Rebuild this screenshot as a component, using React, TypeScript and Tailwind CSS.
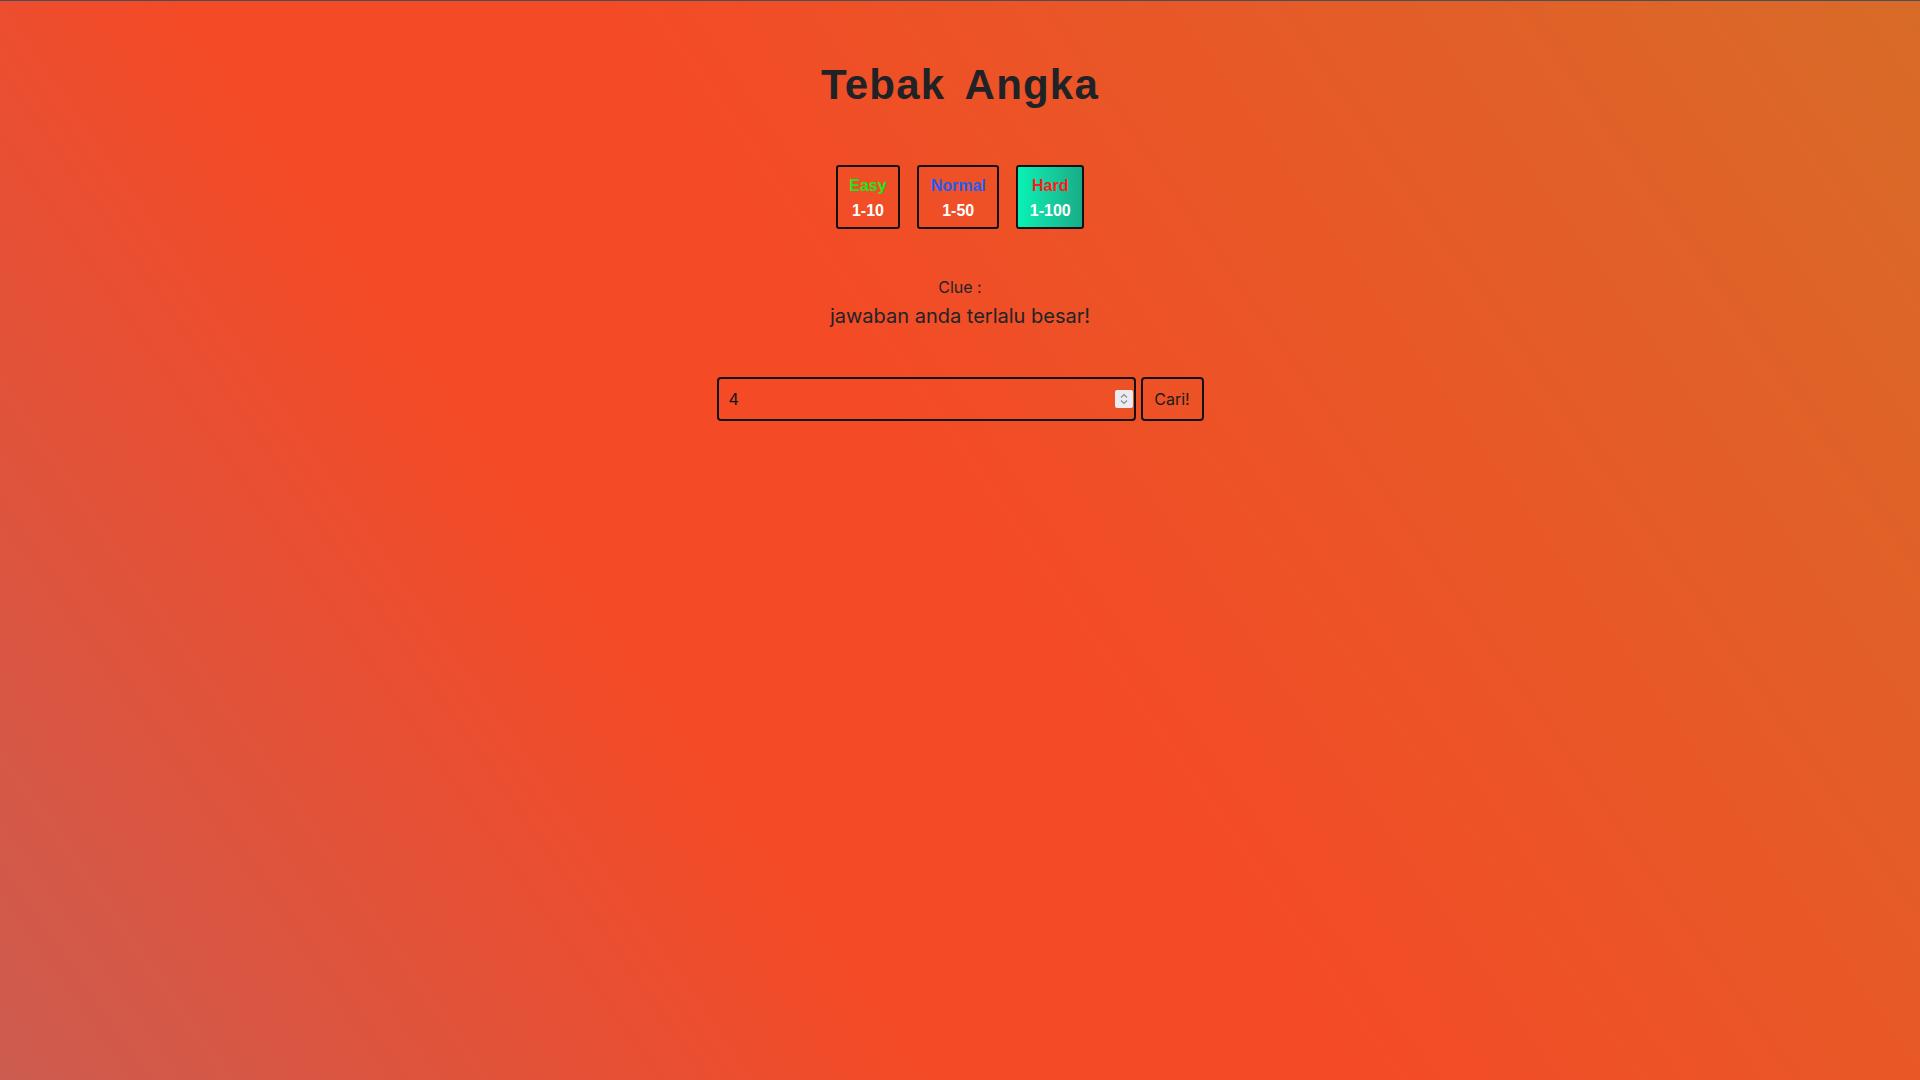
import { useState } from 'react'

const levels = [
  { name: 'Easy', range: '1-10', color: 'text-[#1ee61e]' },
  { name: 'Normal', range: '1-50', color: 'text-[#1f5cf2]' },
  { name: 'Hard', range: '1-100', color: 'text-[#ff1a1a]' },
]

function Spinner() {
  return (
    <div className="absolute right-[3px] top-1/2 -translate-y-1/2 w-[18px] h-[18px] bg-[#ebebf0] rounded-[2px] flex items-center justify-center">
      <svg width="10" height="14" viewBox="0 0 10 14" fill="none" stroke="#8b8b98" strokeWidth="1.2">
        <path d="M2 5.5 L5 2.5 L8 5.5" />
        <path d="M2 8.5 L5 11.5 L8 8.5" />
      </svg>
    </div>
  )
}

export default function App() {
  const [level, setLevel] = useState(2)
  const [guess, setGuess] = useState('4')

  return (
    <div className="min-h-screen w-full border-t border-[#4b4f5c] bg-[linear-gradient(55deg,#cc5c50_0%,#f44a26_35%,#f44a26_50%,#d86b28_100%)] text-[#222326]">
      <div className="flex flex-col items-center pt-[59px]">
        <h1 className="font-['Liberation_Sans',Arial,sans-serif] font-bold text-[42px] leading-[50px] tracking-[1.2px] [word-spacing:8px] text-[#212226]">
          Tebak Angka
        </h1>

        <div className="mt-[55px] flex gap-[17px]">
          {levels.map((l, i) => (
            <button
              key={l.name}
              onClick={() => setLevel(i)}
              className={`flex flex-col items-center border-2 border-[#111] rounded-[3px] px-[11.5px] pt-[6px] pb-[4px] font-['Liberation_Sans',Arial,sans-serif] font-bold text-[16px] leading-[25px] ${
                level === i ? 'bg-linear-to-r from-[#07f2b5] to-[#19ac88]' : 'bg-transparent'
              }`}
            >
              <span className={l.color}>{l.name}</span>
              <span className="text-white">{l.range}</span>
            </button>
          ))}
        </div>

        <div className="mt-[46px] flex flex-col items-center font-['Inter',sans-serif]">
          <p className="text-[16px] leading-[24px]">Clue :</p>
          <p className="mt-[3px] text-[20px] leading-[28px]">jawaban anda terlalu besar!</p>
        </div>

        <div className="mt-[47px] flex gap-[5px] font-['Inter',sans-serif]">
          <div className="relative">
            <input
              type="text"
              value={guess}
              onChange={(e) => setGuess(e.target.value)}
              className="w-[419px] h-[44px] border-2 border-[#111] rounded-[4px] bg-transparent pl-[10px] pr-[26px] text-[16px] text-[#111] outline-none"
            />
            <Spinner />
          </div>
          <button className="h-[44px] w-[63px] border-2 border-[#111] rounded-[4px] text-[16px] text-[#1a1a1a]">
            Cari!
          </button>
        </div>
      </div>
    </div>
  )
}
